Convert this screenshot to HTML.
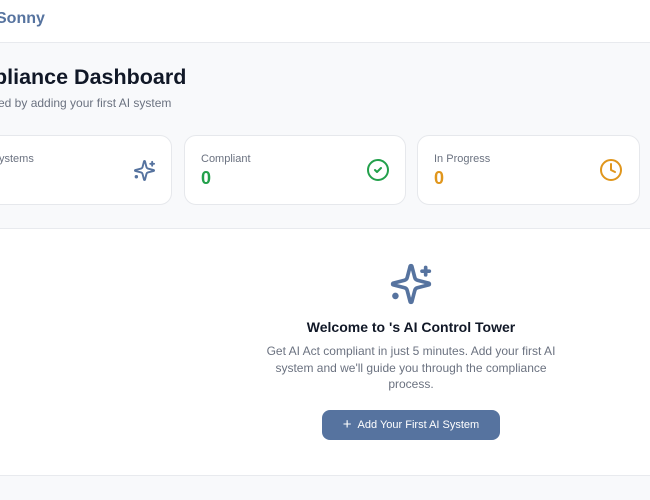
<!DOCTYPE html>
<html><head><style>
body{margin:0;width:650px;height:500px;overflow:hidden;background:#f8f9fb;font-family:"Liberation Sans",sans-serif;position:relative}
.hdr{position:absolute;left:0;top:0;width:650px;height:42px;background:#fff;border-bottom:1px solid #e8eaee}
.abs{position:absolute;white-space:nowrap}
.card{position:absolute;top:135px;height:70px;background:#fff;border:1px solid #e6e8ec;border-radius:12px;box-sizing:border-box}
.lbl{position:absolute;left:16px;top:17px;font-size:11px;color:#6b7280}
.num{position:absolute;left:16px;top:32px;font-size:18px;font-weight:bold}
.panel{position:absolute;left:-20px;top:228px;width:700px;height:246px;background:#fff;border-top:1px solid #e8eaee;border-bottom:1px solid #e8eaee}
</style></head><body>
<div class="hdr"><div class="abs" style="left:-4px;top:10px;font-size:16px;font-weight:bold;color:#56739f">Sonny</div></div>
<div class="abs" style="left:-6px;top:65px;font-size:21.5px;font-weight:bold;color:#111827">pliance Dashboard</div>
<div class="abs" style="left:-2px;top:96px;font-size:12px;color:#6b7280">ed by adding your first AI system</div>
<div class="card" style="left:-60px;width:232px"><div class="lbl" style="left:58px">ystems</div>
<svg style="position:absolute;left:192px;top:23px" width="23" height="23" viewBox="0 0 24 24" fill="none" stroke="#56739f" stroke-width="2" stroke-linecap="round" stroke-linejoin="round"><path d="M9.937 15.5A2 2 0 0 0 8.5 14.063l-6.135-1.582a.5.5 0 0 1 0-.962L8.5 9.936A2 2 0 0 0 9.937 8.5l1.582-6.135a.5.5 0 0 1 .963 0L14.063 8.5A2 2 0 0 0 15.5 9.937l6.135 1.581a.5.5 0 0 1 0 .964L15.5 14.063a2 2 0 0 0-1.437 1.437l-1.582 6.135a.5.5 0 0 1-.963 0z"/><path d="M20 3v4M22 5h-4"/><circle cx="3.5" cy="18.5" r="0.8" fill="#56739f"/></svg></div>
<div class="card" style="left:184px;width:222px"><div class="lbl">Compliant</div><div class="num" style="color:#22a04b">0</div>
<svg style="position:absolute;left:181px;top:22px" width="24" height="24" viewBox="0 0 24 24" fill="none" stroke="#22a04b" stroke-width="2" stroke-linecap="round" stroke-linejoin="round"><circle cx="12" cy="12" r="10"/><path d="m9 12 2 2 4-4"/></svg></div>
<div class="card" style="left:417px;width:223px"><div class="lbl">In Progress</div><div class="num" style="color:#e0961c">0</div>
<svg style="position:absolute;left:181px;top:22px" width="24" height="24" viewBox="0 0 24 24" fill="none" stroke="#e0961c" stroke-width="2" stroke-linecap="round" stroke-linejoin="round"><circle cx="12" cy="12" r="10"/><path d="M12 6v6l4 2"/></svg></div>
<div class="panel"></div>
<svg style="position:absolute;left:389px;top:262px" width="44" height="44" viewBox="0 0 24 24" fill="none" stroke="#56739f" stroke-width="2" stroke-linecap="round" stroke-linejoin="round"><path d="M9.937 15.5A2 2 0 0 0 8.5 14.063l-6.135-1.582a.5.5 0 0 1 0-.962L8.5 9.936A2 2 0 0 0 9.937 8.5l1.582-6.135a.5.5 0 0 1 .963 0L14.063 8.5A2 2 0 0 0 15.5 9.937l6.135 1.581a.5.5 0 0 1 0 .964L15.5 14.063a2 2 0 0 0-1.437 1.437l-1.582 6.135a.5.5 0 0 1-.963 0z"/><path d="M20 3v4M22 5h-4"/><circle cx="3.5" cy="18.5" r="0.8" fill="#56739f"/></svg>
<div class="abs" style="left:211px;width:400px;text-align:center;top:319px;font-size:14px;font-weight:bold;color:#111827">Welcome to 's AI Control Tower</div>
<div class="abs" style="left:256px;width:310px;text-align:center;top:343px;font-size:12px;line-height:16.5px;color:#6b7280;white-space:normal">Get AI Act compliant in just 5 minutes. Add your first AI system and we'll guide you through the compliance process.</div>
<div class="abs" style="left:322px;top:410px;width:178px;height:30px;background:#56739f;border-radius:8px;color:#fff;font-size:11px;text-align:center;line-height:30px"><span style="font-size:15px;vertical-align:-1px;margin-right:6px">+</span>Add Your First AI System</div>
</body></html>
